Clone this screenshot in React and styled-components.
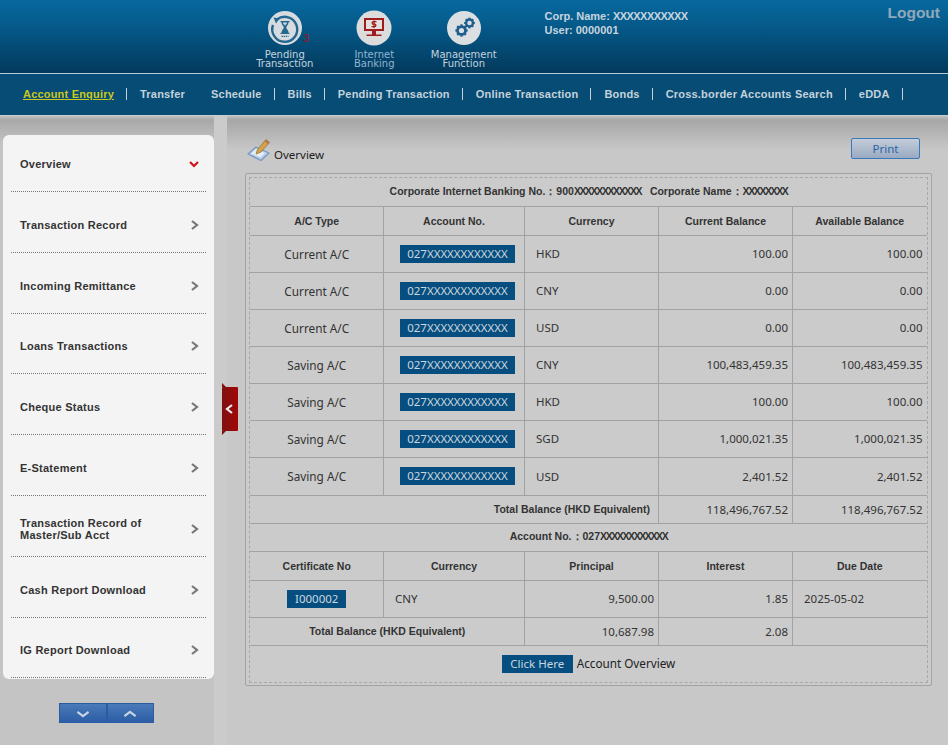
import React from 'react';
import styled, { createGlobalStyle } from 'styled-components';

const GlobalStyle = createGlobalStyle`
  html, body { margin: 0; padding: 0; background: #c8c8c8; }
  body { font-family: "Liberation Sans", Arial, sans-serif; overflow: hidden; }
`;

const NAV = [
  { label: 'Account Enquiry', active: true, sep: true },
  { label: 'Transfer' },
  { label: 'Schedule', sep: true },
  { label: 'Bills', sep: true },
  { label: 'Pending Transaction', sep: true },
  { label: 'Online Transaction', sep: true },
  { label: 'Bonds', sep: true },
  { label: 'Cross.border Accounts Search', sep: true },
  { label: 'eDDA', sep: true },
];

const MENU = [
  ['Overview'],
  ['Transaction Record'],
  ['Incoming Remittance'],
  ['Loans Transactions'],
  ['Cheque Status'],
  ['E-Statement'],
  ['Transaction Record of', 'Master/Sub Acct'],
  ['Cash Report Download'],
  ['IG Report Download'],
];

const ACCOUNTS = [
  ['Current A/C', 'HKD', '100.00', 37],
  ['Current A/C', 'CNY', '0.00', 37],
  ['Current A/C', 'USD', '0.00', 37],
  ['Saving A/C', 'CNY', '100,483,459.35', 37],
  ['Saving A/C', 'HKD', '100.00', 37],
  ['Saving A/C', 'SGD', '1,000,021.35', 37],
  ['Saving A/C', 'USD', '2,401.52', 38],
];

const HourglassIcon = () => (
  <svg width="36" height="36" viewBox="0 0 36 36">
    <circle cx="18" cy="18" r="17" fill="#d6dbdf" />
    <path d="M10 9.500A12.500 12.500 0 1 1 6 15" fill="none" stroke="#25688f" strokeWidth="2.400" />
    <path d="M6.500 7.500l6 1-3.500 5z" fill="#25688f" />
    <path d="M13.500 11h9v1.300h-1c0 2.700-2 3.400-2.300 5.200.3 1.800 2.300 2.500 2.300 5.200h1V24h-9v-1.300h1c0-2.700 2-3.400 2.300-5.200-.3-1.800-2.300-2.500-2.300-5.200h-1z" fill="#25688f" />
    <path d="M16 12.500h4c-.2 1.300-1.200 2.100-2 3-.8-.9-1.800-1.700-2-3z" fill="#d6dbdf" />
    <path d="M14.500 26.300h7" stroke="#25688f" strokeWidth="1.300" strokeDasharray="1.400 .7" />
  </svg>
);

const MonitorIcon = () => (
  <svg width="36" height="36" viewBox="0 0 36 36">
    <circle cx="18" cy="18" r="17.500" fill="#dcdcdc" />
    <path d="M8 8h20v13H8z" fill="#a01c1c" />
    <path d="M10 10h16v9H10z" fill="#e4dfdf" />
    <path d="M16 21h4v3.500h5.500V26h-15v-1.500H16z" fill="#a01c1c" />
    <path d="M20.500 11.700h-3.300c-1.400 0-1.400 2.400 0 2.400h1.600c1.400 0 1.400 2.500 0 2.500h-3.300M18 10.500v7.500" fill="none" stroke="#a01c1c" strokeWidth="1.300" />
  </svg>
);

const Gear = ({ x, y, r }) => (
  <g transform={`translate(${x} ${y})`}>
    <circle r={r * 0.72} fill="none" stroke="#1f5f8f" strokeWidth={r * 0.5} />
    {[0, 45, 90, 135, 180, 225, 270, 315].map(a => (
      <rect key={a} x={-r * 0.2} y={-r * 1.12} width={r * 0.4} height={r * 0.45} fill="#1f5f8f" transform={`rotate(${a})`} />
    ))}
  </g>
);

const GearsIcon = () => (
  <svg width="36" height="36" viewBox="0 0 36 36">
    <circle cx="18" cy="18" r="17" fill="#dcdfe1" />
    <Gear x={15.500} y={20.500} r={5.500} />
    <Gear x={23.500} y={13} r={4.800} />
  </svg>
);

const PencilIcon = () => (
  <svg width="24" height="24" viewBox="0 0 24 24">
    <path d="M1 17l8-7 13 6-8 7.500z" fill="#b9cde4" stroke="#7396c2" strokeWidth="1.200" strokeLinejoin="round" />
    <path d="M4 16.500l5-4.500 9 4-4.500 4.500z" fill="#e4ecf5" />
    <path d="M9 17l1.500-4.500L19 2.500l3.500 3-8.500 9.500z" fill="#d2a24c" stroke="#9a7430" strokeWidth=".8" />
    <path d="M19 2.500l3.500 3-1.500 1.700-3.500-3z" fill="#b27a5a" />
  </svg>
);

const Chevron = ({ dir = 'right', color = '#777', size = 10, weight = 2.2 }) => {
  const points = {
    right: '3,1 8,5 3,9',
    left: '7,1 2,5 7,9',
    down: '1,3 5,7 9,3',
    up: '1,7 5,3 9,7',
    flatDown: '1,3.500 5,6.500 9,3.500',
    flatUp: '1,6.500 5,3.500 9,6.500',
  }[dir];
  return (
    <svg width={size} height={size} viewBox="0 0 10 10">
      <polyline points={points} fill="none" stroke={color} strokeWidth={weight} />
    </svg>
  );
};

const App = () => (
  <Page>
    <GlobalStyle />
    <Header>
      <Shortcuts>
        <Shortcut>
          <HourglassIcon />
          <Badge>3</Badge>
          <ShortcutLabel>Pending<br />Transaction</ShortcutLabel>
        </Shortcut>
        <Shortcut>
          <MonitorIcon />
          <ShortcutLabel $muted>Internet<br />Banking</ShortcutLabel>
        </Shortcut>
        <Shortcut>
          <GearsIcon />
          <ShortcutLabel>Management<br />Function</ShortcutLabel>
        </Shortcut>
      </Shortcuts>
      <UserInfo>
        <div>Corp. Name: <Mask $tight="-.55px">XXXXXXXXXXX</Mask></div>
        <div>User: 0000001</div>
      </UserInfo>
      <Logout>Logout</Logout>
    </Header>
    <Nav>
      {NAV.map(item => (
        <NavItem key={item.label} $active={item.active} $sep={item.sep}>{item.label}</NavItem>
      ))}
    </Nav>
    <Body>
      <Sidebar>
        <Menu>
          {MENU.map((lines, i) => (
            <MenuItem key={lines[0]}>
              <MenuLabel>{lines.map(l => <div key={l}>{l}</div>)}</MenuLabel>
              {i === 0
                ? <Chevron dir="down" color="#d0121b" />
                : <Chevron dir="right" />}
            </MenuItem>
          ))}
        </Menu>
        <Pager>
          <PagerButton><Chevron dir="flatDown" color="#c9d4e4" size={14} weight={1.500} /></PagerButton>
          <PagerButton><Chevron dir="flatUp" color="#c9d4e4" size={14} weight={1.500} /></PagerButton>
        </Pager>
      </Sidebar>
      <Divider />
      <Main>
        <Collapse><Chevron dir="left" color="#eee" size={10} /></Collapse>
        <TitleRow>
          <Title><PencilIcon /><span>Overview</span></Title>
          <PrintButton>Print</PrintButton>
        </TitleRow>
        <Frame>
          <Dashed>
            <Table>
              <colgroup>
                <col width="133" /><col width="141" /><col width="134" /><col width="134" /><col width="134" />
              </colgroup>
              <tbody>
                <Row $h={28}>
                  <Head colSpan="5">
                    <Small>Corporate Internet Banking No.：900<Mask>XXXXXXXXXXXX</Mask>&nbsp;&nbsp; Corporate Name：<Mask>XXXXXXXX</Mask></Small>
                  </Head>
                </Row>
                <Row $h={29}>
                  <Head>A/C Type</Head>
                  <Head>Account No.</Head>
                  <Head>Currency</Head>
                  <Head>Current Balance</Head>
                  <Head>Available Balance</Head>
                </Row>
                {ACCOUNTS.map(([type, cur, bal, h], i) => (
                  <Row key={i} $h={h}>
                    <TypeCell>{type}</TypeCell>
                    <Cell $align="center"><Tag $w={115} $nudge={7}>027XXXXXXXXXXXX</Tag></Cell>
                    <Cell $pad>{cur}</Cell>
                    <Cell $align="right">{bal}</Cell>
                    <Cell $align="right">{bal}</Cell>
                  </Row>
                ))}
                <Row $h={28}>
                  <Head colSpan="3" $align="right" $end={8}>Total Balance (HKD Equivalent)</Head>
                  <Cell $align="right">118,496,767.52</Cell>
                  <Cell $align="right">118,496,767.52</Cell>
                </Row>
                <Row $h={28}>
                  <Head colSpan="5"><Small>Account No.：027<Mask>XXXXXXXXXXXX</Mask></Small></Head>
                </Row>
                <Row $h={29}>
                  <Head>Certificate No</Head>
                  <Head>Currency</Head>
                  <Head>Principal</Head>
                  <Head>Interest</Head>
                  <Head>Due Date</Head>
                </Row>
                <Row $h={37}>
                  <Cell $align="center"><Tag $w={59}>I000002</Tag></Cell>
                  <Cell $pad>CNY</Cell>
                  <Cell $align="right">9,500.00</Cell>
                  <Cell $align="right">1.85</Cell>
                  <Cell $pad>2025-05-02</Cell>
                </Row>
                <Row $h={28}>
                  <Head colSpan="2">Total Balance (HKD Equivalent)</Head>
                  <Cell $align="right">10,687.98</Cell>
                  <Cell $align="right">2.08</Cell>
                  <Cell />
                </Row>
                <Row $h={37}>
                  <Cell colSpan="5" $align="center">
                    <Tag $w={71}>Click Here</Tag>
                    <Overview>Account Overview</Overview>
                  </Cell>
                </Row>
              </tbody>
            </Table>
          </Dashed>
        </Frame>
      </Main>
    </Body>
  </Page>
);

export default App;

const Page = styled.div`
  width: 948px;
  height: 745px;
  overflow: hidden;
  display: flex;
  flex-direction: column;
`;
const Header = styled.header`
  height: 73px;
  flex: none;
  position: relative;
  display: flex;
  background: linear-gradient(#07699f 0%, #055a8a 35%, #03395c 100%);
  border-bottom: 1px solid #b8cbd6;
`;
const Shortcuts = styled.div`
  display: flex;
  margin-left: 240px;
  padding-top: 10px;
`;
const Shortcut = styled.div`
  position: relative;
  width: 89.500px;
  display: flex;
  flex-direction: column;
  align-items: center;
`;
const Badge = styled.span`
  position: absolute;
  top: 22px;
  left: 63px;
  font-size: 11px;
  color: #a5101c;
`;
const ShortcutLabel = styled.div`
  font-family: "DejaVu Sans", sans-serif;
  font-size: 10px;
  line-height: 9px;
  margin-top: 4px;
  text-align: center;
  color: ${props => props.$muted ? '#8fb6cf' : '#c3d2dc'};
`;
const UserInfo = styled.div`
  margin-left: 36px;
  padding-top: 9px;
  font-size: 11px;
  font-weight: bold;
  line-height: 14px;
  color: #c6d4de;
`;
const Mask = styled.span`
  letter-spacing: ${props => props.$tight || '-1.400px'};
`;
const Logout = styled.div`
  position: absolute;
  top: 4px;
  right: 8px;
  font-size: 15.500px;
  font-weight: bold;
  color: #8fa9bb;
`;
const Nav = styled.nav`
  height: 42px;
  flex: none;
  display: flex;
  align-items: center;
  padding: 0 0 2px 23px;
  box-sizing: border-box;
  background: #064c74;
  border-bottom: 1px solid #c8ccd0;
`;
const NavItem = styled.a`
  font-size: 11px;
  font-weight: bold;
  letter-spacing: .2px;
  line-height: 12px;
  white-space: nowrap;
  color: ${props => props.$active ? '#c9c81e' : '#c5d2db'};
  text-decoration: ${props => props.$active ? 'underline' : 'none'};
  padding-right: ${props => props.$sep ? '12px' : '0'};
  margin-right: ${props => props.$sep ? '13px' : '26px'};
  border-right: ${props => props.$sep ? '1px solid #c5d2db' : 'none'};
`;
const Body = styled.div`
  flex: 1;
  display: flex;
  min-height: 0;
`;
const Sidebar = styled.aside`
  width: 214px;
  flex: none;
  padding: 19px 0 0 3px;
  box-sizing: border-box;
  background: linear-gradient(#c0c0c0 0, #a8a8a8 4px, #c4c4c4 28px);
`;
const Menu = styled.ul`
  list-style: none;
  margin: 0;
  padding: 0 8px 1px;
  background: #f4f4f4;
  border-radius: 6px;
`;
const MenuItem = styled.li`
  height: 60.800px;
  box-sizing: border-box;
  display: flex;
  align-items: center;
  justify-content: space-between;
  padding: 6px 7px 0 9px;
  border-bottom: 1px dotted #777;
  &:first-child {
    height: 57px;
    padding-top: 2px;
  }
`;
const MenuLabel = styled.div`
  font-size: 11px;
  font-weight: bold;
  letter-spacing: .25px;
  line-height: 12px;
  color: #333;
`;
const Pager = styled.div`
  display: flex;
  margin: 24px 0 0 56px;
`;
const PagerButton = styled.button`
  width: 47.500px;
  height: 20px;
  padding: 0;
  display: flex;
  align-items: center;
  justify-content: center;
  border: 1px solid #2a5da0;
  border-bottom: 0;
  background: linear-gradient(#4a7ab8, #2a5ca6);
`;
const Divider = styled.div`
  width: 13px;
  flex: none;
  background: #cbcbcb;
`;
const Main = styled.main`
  flex: 1;
  position: relative;
  padding: 21px 16px 0 18px;
  background: linear-gradient(#c0c0c0 0, #a6a6a6 4px, #c8c8c8 34px);
`;
const Collapse = styled.div`
  position: absolute;
  top: 271px;
  left: -5px;
  width: 16px;
  height: 44px;
  border-radius: 1px;
  display: flex;
  align-items: center;
  justify-content: center;
  background: linear-gradient(90deg, #7e1111, #a30606);
  &::before, &::after {
    content: '';
    position: absolute;
    left: 0;
    border-left: 4px solid #7e1111;
    border-right: 0 solid transparent;
  }
  &::before {
    top: -4px;
    border-top: 4px solid transparent;
  }
  &::after {
    bottom: -4px;
    border-bottom: 4px solid transparent;
  }
`;
const TitleRow = styled.div`
  display: flex;
  align-items: flex-start;
  justify-content: space-between;
  height: 36px;
  padding-right: 12px;
`;
const Title = styled.div`
  display: flex;
  align-items: flex-end;
  gap: 3px;
  height: 25px;
  margin-left: 2px;
  font-family: "Noto Sans", sans-serif;
  font-size: 11.500px;
  line-height: 14px;
  color: #222;
  svg { align-self: flex-start; }
`;
const PrintButton = styled.button`
  width: 69px;
  height: 21px;
  margin-top: 1px;
  padding: 0;
  font-family: "Noto Sans", sans-serif;
  font-size: 11.500px;
  color: #2a64a8;
  border: 1px solid #3a78b8;
  border-radius: 2px;
  background: linear-gradient(#c4cdd9, #99aac2);
`;
const Frame = styled.div`
  width: 687px;
  box-sizing: border-box;
  padding: 3px 3px 2px;
  border: 1px solid #a3a3a3;
  border-radius: 2px;
  background: #cbcbcb;
`;
const Dashed = styled.div`
  border: 1px dashed #a8a8a8;
`;
const Table = styled.table`
  width: 676px;
  table-layout: fixed;
  border-collapse: collapse;
  margin: 0 auto;
`;
const Row = styled.tr`
  height: ${props => props.$h}px;
  tr + & > td { border-top: 1px solid #a2a2a2; }
  & > td + td { border-left: 1px solid #a2a2a2; }
`;
const Head = styled.td`
  padding: 0 ${props => props.$end || 4}px 0 4px;
  font-size: 10.500px;
  font-weight: bold;
  color: #333;
  text-align: ${props => props.$align || 'center'};
`;
const Small = styled.span`
  font-size: 10.500px;
`;
const Cell = styled.td`
  font-family: "Noto Sans", sans-serif;
  font-size: 11.500px;
  color: #333;
  text-align: ${props => props.$align || 'left'};
  padding: ${props => props.$pad ? '0 4px 0 11px' : '0 4px'};
`;
const TypeCell = styled(Cell)`
  font-size: 11.800px;
  text-align: center;
`;
const Tag = styled.span`
  display: inline-block;
  width: ${props => props.$w}px;
  height: 18px;
  line-height: 18px;
  margin-left: ${props => props.$nudge || 0}px;
  text-align: center;
  font-family: "Noto Sans", sans-serif;
  font-size: 11.500px;
  color: #ccd6de;
  background: #064e80;
`;
const Overview = styled.span`
  margin-left: 4px;
  font-size: 11.700px;
  color: #222;
`;
